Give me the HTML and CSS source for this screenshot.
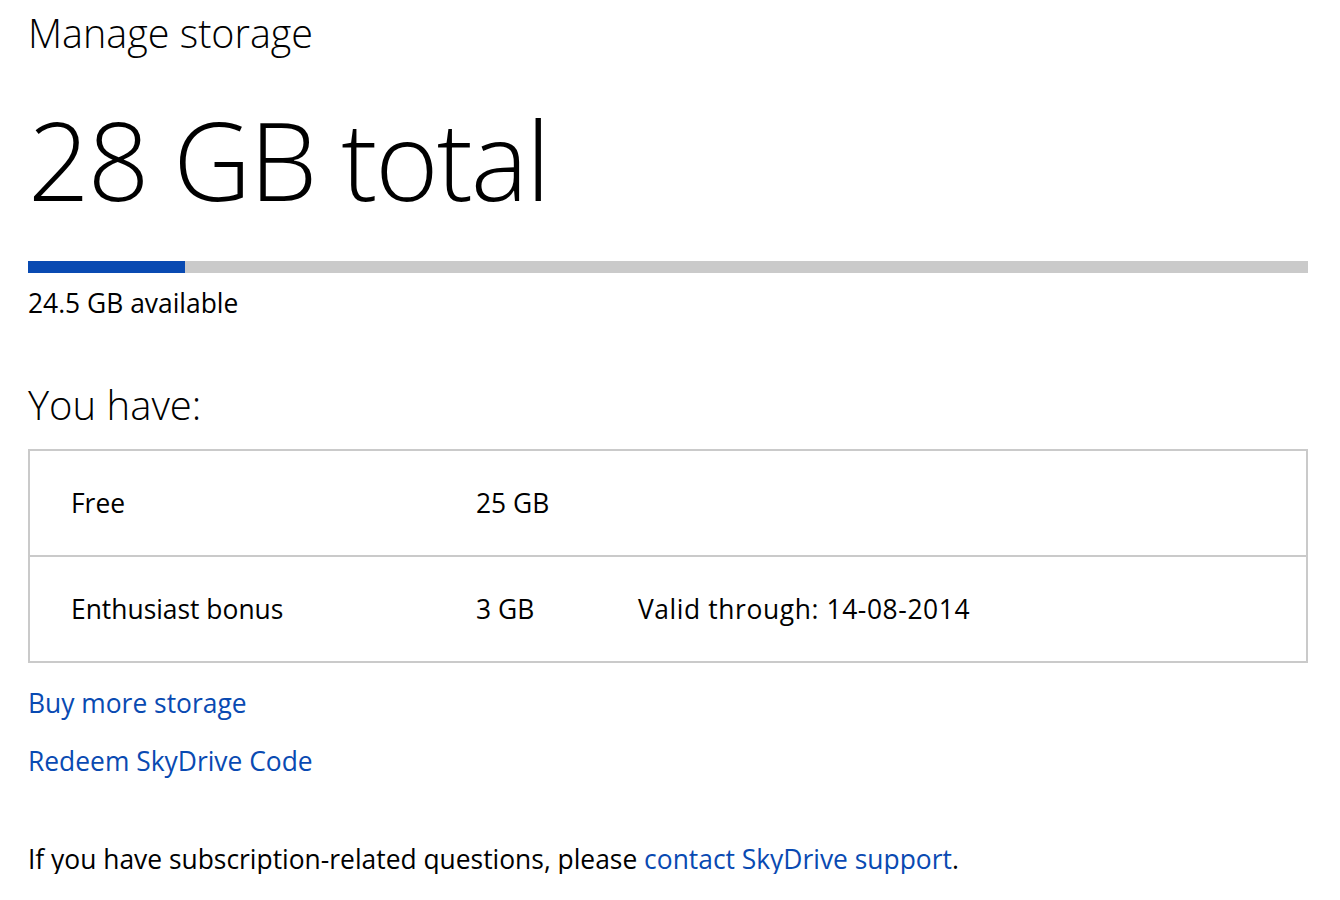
FILE: index.html
```html
<!DOCTYPE html>
<html lang="en">
<head>
    <meta charset="UTF-8">
    <meta name="viewport" content="width=device-width, initial-scale=1.0">
    <title>Manage storage</title>
    <link rel="stylesheet" href="styles.css">
</head>
<body>
    <div class="page">
        <h1 class="page-title">Manage storage</h1>

        <div class="total">28 GB total</div>

        <div class="usage-bar">
            <div class="usage-fill" style="width: 12.3%;"></div>
        </div>
        <div class="available">24.5 GB available</div>

        <h2 class="section-title">You have:</h2>

        <div class="plans">
            <div class="plan-row">
                <span class="plan-name">Free</span>
                <span class="plan-size">25 GB</span>
                <span class="plan-note"></span>
            </div>
            <div class="plan-row">
                <span class="plan-name">Enthusiast bonus</span>
                <span class="plan-size">3 GB</span>
                <span class="plan-note">Valid through: 14-08-2014</span>
            </div>
        </div>

        <div class="actions">
            <a href="#" class="link">Buy more storage</a>
            <a href="#" class="link">Redeem SkyDrive Code</a>
        </div>

        <p class="help">If you have subscription-related questions, please <a href="#" class="link">contact SkyDrive support</a>.</p>
    </div>
</body>
</html>
```

FILE: styles.css
```css
body {
    margin: 0;
    font-family: "Open Sans", "Noto Sans", sans-serif;
    color: #000;
    background: #fff;
}
.page {
    width: 1280px;
    padding: 8px 0 0 28px;
}
.page-title {
    margin: 0;
    font-size: 39.5px;
    font-weight: 300;
    line-height: 50px;
}
.total {
    margin-top: 37px;
    font-size: 108px;
    font-weight: 300;
    line-height: 130px;
    letter-spacing: -2px;
}
.usage-bar {
    margin-top: 36px;
    height: 12px;
    background: #cacaca;
}
.usage-fill {
    height: 100%;
    background: #094ab2;
}
.available {
    margin-top: 15px;
    font-size: 26.4px;
    line-height: 30px;
}
.section-title {
    margin: 62px 0 0;
    font-size: 40px;
    font-weight: 300;
    line-height: 50px;
}
.plans {
    margin-top: 19px;
    border: 2px solid #cacaca;
}
.plan-row {
    display: grid;
    grid-template-columns: 405px 162px 1fr;
    align-items: center;
    height: 104px;
    padding-left: 41px;
    font-size: 26.4px;
}
.plan-row + .plan-row {
    border-top: 2px solid #cacaca;
}
.plan-note {
    letter-spacing: 0.6px;
}
.actions {
    display: flex;
    flex-direction: column;
    align-items: flex-start;
    gap: 28px;
    margin-top: 25px;
}
.link {
    color: #094ab2;
    text-decoration: none;
    font-size: 26.4px;
    line-height: 30px;
}
.help {
    margin: 68px 0 0;
    font-size: 26.4px;
    line-height: 30px;
}
```
